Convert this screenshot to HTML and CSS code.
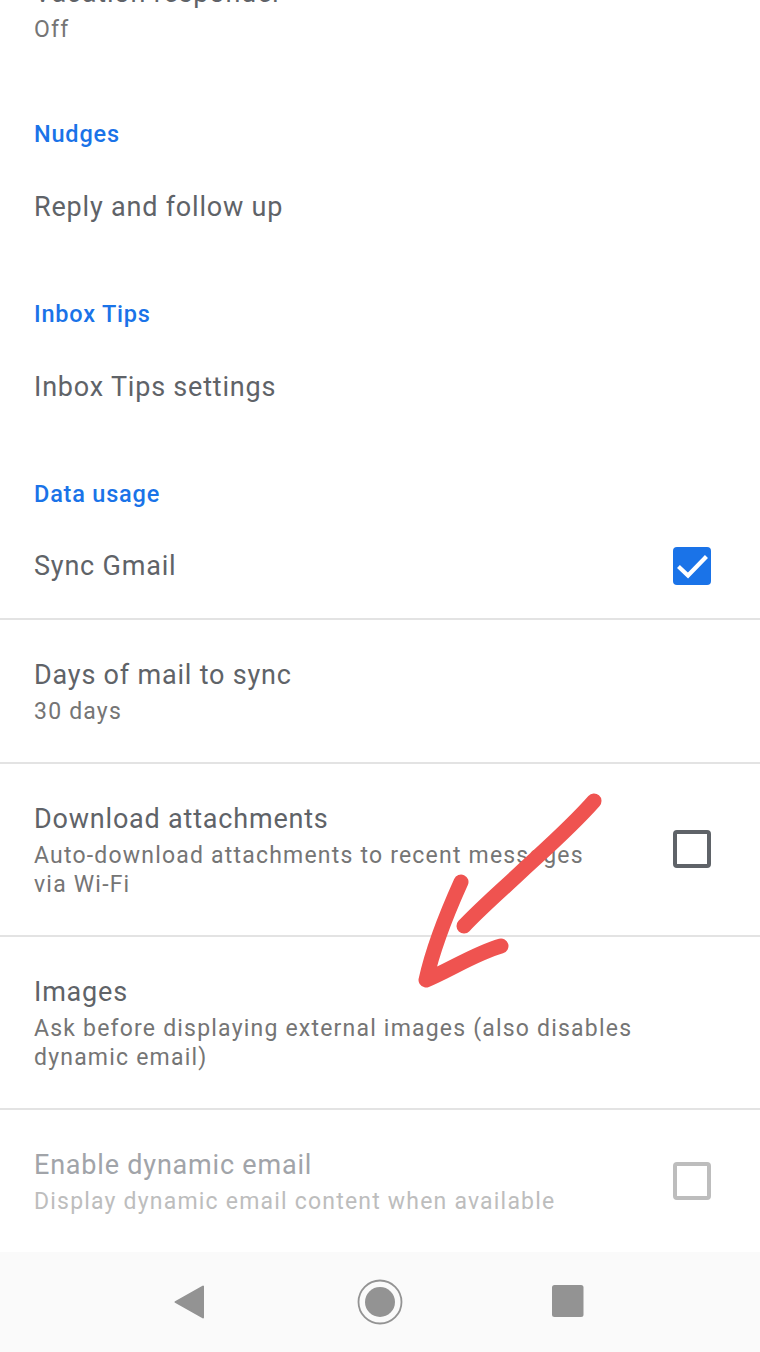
FILE: index.html
```html
<!DOCTYPE html>
<html lang="en">
<head>
<meta charset="UTF-8">
<meta name="viewport" content="width=device-width, initial-scale=1.0">
<title>Settings</title>
<link rel="stylesheet" href="styles.css">
</head>
<body>

<div class="screen">
  <div class="settings">
    <div class="list">
      <div class="pref">
        <div class="text">
          <div class="title">Vacation responder</div>
          <div class="summary">Off</div>
        </div>
      </div>

      <div class="category">Nudges</div>
      <div class="pref single">
        <div class="text"><div class="title">Reply and follow up</div></div>
      </div>

      <div class="category">Inbox Tips</div>
      <div class="pref single">
        <div class="text"><div class="title">Inbox Tips settings</div></div>
      </div>

      <div class="category">Data usage</div>
      <div class="pref single divided">
        <div class="text"><div class="title">Sync Gmail</div></div>
        <span class="checkbox checked">
          <svg viewBox="0 0 38 38" width="38" height="38"><path d="M7 21 L15 28.5 L32 11" fill="none" stroke="#fff" stroke-width="4.2" stroke-linecap="square"/></svg>
        </span>
      </div>

      <div class="pref divided">
        <div class="text">
          <div class="title">Days of mail to sync</div>
          <div class="summary">30 days</div>
        </div>
      </div>

      <div class="pref divided">
        <div class="text">
          <div class="title">Download attachments</div>
          <div class="summary">Auto-download attachments to recent messages via Wi-Fi</div>
        </div>
        <span class="checkbox"></span>
      </div>

      <div class="pref divided">
        <div class="text">
          <div class="title">Images</div>
          <div class="summary">Ask before displaying external images (also disables dynamic email)</div>
        </div>
      </div>

      <div class="pref divided disabled">
        <div class="text">
          <div class="title">Enable dynamic email</div>
          <div class="summary">Display dynamic email content when available</div>
        </div>
        <span class="checkbox"></span>
      </div>
    </div>
  </div>

  <nav class="navbar">
    <div class="nav-btn">
      <svg viewBox="0 0 40 40" width="40" height="40"><path d="M33 4.5 L33 35.5 L5.5 20 Z" fill="#939393" stroke="#939393" stroke-width="2" stroke-linejoin="round"/></svg>
    </div>
    <div class="nav-btn">
      <svg viewBox="0 0 48 48" width="48" height="48"><circle cx="24" cy="24" r="21.5" fill="none" stroke="#939393" stroke-width="1.8"/><circle cx="24" cy="24" r="15" fill="#939393"/></svg>
    </div>
    <div class="nav-btn">
      <svg viewBox="0 0 40 40" width="40" height="40"><rect x="2" y="3" width="31.5" height="32" rx="2.5" fill="#939393"/></svg>
    </div>
  </nav>

  <!-- hand drawn arrow on the screenshot -->
  <svg class="scribble" viewBox="0 0 760 1352" width="760" height="1352">
    <g fill="none" stroke="#ef5350" stroke-width="15" stroke-linecap="round" stroke-linejoin="round">
      <path d="M594 801 C572 826 548 847 523 870 C503 889 483 906 464 926"/>
      <path d="M461 882 C447 913 433 948 426 980 C450 970 476 953 501 946"/>
    </g>
  </svg>
</div>

</body>
</html>
```

FILE: styles.css
```css
* {
  box-sizing: border-box;
}
body {
  margin: 0;
  background: #fff;
  font-family: Roboto, "Noto Sans", sans-serif;
  overflow: hidden;
}
.screen {
  position: relative;
  width: 760px;
  height: 1352px;
  display: flex;
  flex-direction: column;
}
.settings {
  height: 1252px;
  overflow: hidden;
}
.list {
  margin-top: -62px;
}

.category {
  padding: 40px 34px 6px;
  line-height: 28px;
  font-size: 23.5px;
  font-weight: 500;
  letter-spacing: 0.8px;
  color: #1a73e8;
}

.pref {
  display: flex;
  align-items: center;
  padding: 35px 49px 36px 34px;
}
.pref.single {
  min-height: 106px;
  padding-top: 0;
  padding-bottom: 0;
}
.pref.divided {
  border-bottom: 2px solid #e3e3e3;
}
.text {
  flex: 1;
}
.title {
  font-size: 27px;
  line-height: 41px;
  letter-spacing: 0.8px;
  color: #5f6368;
}
.summary {
  font-size: 23px;
  line-height: 29px;
  letter-spacing: 1.2px;
  margin-top: 1px;
  color: #757575;
}
.disabled .title { color: #a1a4a9; }
.disabled .summary { color: #bdbdbd; }

.checkbox {
  margin-left: 56px;
  width: 38px;
  height: 38px;
  border: 4px solid #5f6368;
  border-radius: 4px;
  flex-shrink: 0;
}
.checkbox svg {
  display: block;
}
.checkbox.checked {
  border: none;
  background: #1a73e8;
}
.disabled .checkbox {
  border-color: #bdbdbd;
}

.navbar {
  height: 100px;
  background: #fafafa;
  display: flex;
  justify-content: center;
  align-items: center;
}
.nav-btn {
  width: 190px;
  display: flex;
  justify-content: center;
  align-items: center;
}
.nav-btn svg {
  display: block;
}

.scribble {
  position: absolute;
  left: 0;
  top: 0;
  pointer-events: none;
}
```
